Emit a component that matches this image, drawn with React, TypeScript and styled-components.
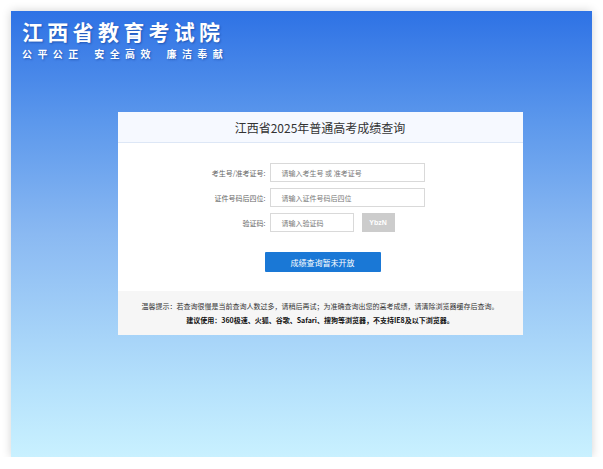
import styled, { createGlobalStyle } from 'styled-components'

const GlobalStyle = createGlobalStyle`
  html, body {
    margin: 0;
    padding: 0;
    background: #fff;
  }
  body {
    font-family: "Noto Sans CJK SC", "Noto Sans", sans-serif;
  }
`

const Page = styled.div`
  width: 581px;
  height: 446px;
  margin: 11px 0 0 11px;
  box-shadow: 0 0 9px rgba(0, 0, 0, 0.18);
  background: linear-gradient(180deg, #2e72e5 0%, #5c98ec 25%, #8ab9f2 50%, #b6e2fc 85%, #c9f1ff 100%);
  display: flex;
  flex-direction: column;
  align-items: center;
`

const Brand = styled.div`
  align-self: flex-start;
  padding: 5px 0 0 11px;
  color: #fff;
  text-shadow: 1px 1px 2px rgba(0, 40, 120, 0.45);
`

const BrandName = styled.div`
  font-size: 21px;
  font-weight: 700;
  letter-spacing: 4.3px;
  line-height: 30px;
`

const Slogan = styled.div`
  font-size: 10px;
  font-weight: 700;
  letter-spacing: 5.4px;
  line-height: 14px;
  margin-top: 1px;
  word-spacing: 3px;
`

const Card = styled.div`
  width: 405px;
  margin: 51px 0 0 37px;
  background: #fff;
`

const CardHeader = styled.div`
  height: 30px;
  background: #f6f9ff;
  border-bottom: 1px solid #dde7f6;
  display: flex;
  align-items: center;
  justify-content: center;
  font-size: 12px;
  color: #333;
`

const Form = styled.div`
  padding: 20px 0 19px;
  display: flex;
  flex-direction: column;
  align-items: center;
`

const Row = styled.div`
  display: flex;
  align-items: center;
  width: 405px;
  margin-bottom: 6px;
`

const Label = styled.div`
  width: 148px;
  text-align: right;
  padding-right: 4px;
  font-size: 7px;
  color: #666;
`

const Input = styled.div<{ $w: number }>`
  width: ${({ $w }) => $w}px;
  height: 19px;
  box-sizing: border-box;
  border: 1px solid #d9d9d9;
  padding-left: 11px;
  display: flex;
  align-items: center;
  font-size: 7px;
  color: #777;
  white-space: pre;
`

const Captcha = styled.div`
  width: 33px;
  height: 19px;
  margin-left: 8px;
  background: #ccc;
  color: #fff;
  font-family: "Liberation Sans", Arial, sans-serif;
  font-weight: 700;
  font-size: 7px;
  display: flex;
  align-items: center;
  justify-content: center;
`

const SubmitButton = styled.button`
  margin: 14px 0 0 5px;
  width: 116px;
  height: 20px;
  border: none;
  border-radius: 1px;
  background: #1a78d6;
  color: #fff;
  font-family: inherit;
  font-size: 8px;
  padding: 0;
`

const Notice = styled.div`
  background: #f6f6f6;
  height: 44px;
  display: flex;
  flex-direction: column;
  align-items: center;
  justify-content: center;
  gap: 2px;
  font-size: 7px;
  line-height: 12px;
`

const NoticeLine = styled.div<{ $strong?: boolean }>`
  color: ${({ $strong }) => ($strong ? '#111' : '#333')};
  font-weight: ${({ $strong }) => ($strong ? 700 : 400)};
`

export default function App() {
  return (
    <>
      <GlobalStyle />
      <Page>
        <Brand>
          <BrandName>江西省教育考试院</BrandName>
          <Slogan>公平公正 安全高效 廉洁奉献</Slogan>
        </Brand>
        <Card>
          <CardHeader>江西省2025年普通高考成绩查询</CardHeader>
          <Form>
            <Row>
              <Label>考生号/准考证号:</Label>
              <Input $w={155}>请输入考生号 或 准考证号</Input>
            </Row>
            <Row>
              <Label>证件号码后四位:</Label>
              <Input $w={155}>请输入证件号码后四位</Input>
            </Row>
            <Row>
              <Label>验证码:</Label>
              <Input $w={84}>请输入验证码</Input>
              <Captcha>YbzN</Captcha>
            </Row>
            <SubmitButton>成绩查询暂未开放</SubmitButton>
          </Form>
          <Notice>
            <NoticeLine>
              温馨提示：若查询很慢是当前查询人数过多，请稍后再试；为准确查询出您的高考成绩，请清除浏览器缓存后查询。
            </NoticeLine>
            <NoticeLine $strong>
              建议使用：360极速、火狐、谷歌、Safari、搜狗等浏览器，不支持IE8及以下浏览器。
            </NoticeLine>
          </Notice>
        </Card>
      </Page>
    </>
  )
}
